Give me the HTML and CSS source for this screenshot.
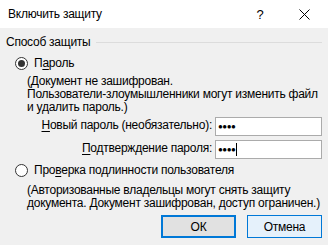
FILE: index.html
```html
<!DOCTYPE html>
<html lang="ru">
  <head>
    <meta charset="UTF-8" />
    <title>Включить защиту</title>
    <link rel="stylesheet" href="styles.css">
  </head>
  <body>
    <div class="dialog">
      <div class="titlebar">
        <span class="title">Включить защиту</span>
        <span class="tb-btn help">?</span>
        <span class="tb-btn close">
          <svg width="11" height="11" viewBox="0 0 11 11">
            <path d="M0.5 0.5 L10.5 10.5 M10.5 0.5 L0.5 10.5" stroke="#000" stroke-width="1" fill="none" />
          </svg>
        </span>
      </div>

      <div class="content">
        <div class="group-title">
          <span>Способ защиты</span>
          <span class="group-line"></span>
        </div>

        <div class="radio-row first">
          <span class="radio checked"></span>
          <span>П<u>а</u>роль</span>
        </div>
        <p class="note">
          (Документ не зашифрован.<br />
          Пользователи-злоумышленники могут изменить файл<br />
          и удалить пароль.)
        </p>

        <div class="fields">
          <label class="field-label"><u>Н</u>овый пароль (необязательно):</label>
          <div class="textbox">●●●●</div>
          <label class="field-label"><u>П</u>одтверждение пароля:</label>
          <div class="textbox">●●●●<span class="caret"></span></div>
        </div>

        <div class="radio-row second">
          <span class="radio"></span>
          <span>Про<u>в</u>ерка подлинности пользователя</span>
        </div>
        <p class="note note-second">
          (Авторизованные владельцы могут снять защиту<br />
          документа. Документ зашифрован, доступ ограничен.)
        </p>

        <div class="buttons">
          <button class="btn btn-default">ОК</button>
          <button class="btn btn-hover">Отмена</button>
        </div>
      </div>
    </div>
  </body>
</html>
```

FILE: styles.css
```css
/* Base */
:root {
  --face: #f0f0f0;
  --accent: #0078d7;
  --text: #000;
}

body {
  margin: 0;
  background: var(--face);
  font-family: "Liberation Sans", sans-serif;
  font-size: 12px;
  letter-spacing: -0.25px;
  color: var(--text);
}

u {
  text-decoration: underline;
  text-underline-offset: 2px;
}

.dialog {
  width: 328px;
  height: 245px;
  overflow: hidden;
  white-space: nowrap;
}

/* Title bar */
.titlebar {
  height: 28px;
  background: white;
  display: flex;
  align-items: center;
}

.title {
  padding-left: 8px;
  flex: 1;
}

.tb-btn {
  display: flex;
  align-items: center;
  justify-content: center;
}

.help {
  width: 14px;
  margin-right: 32px;
  font-size: 13px;
}

.close {
  width: 11px;
  margin-right: 18px;
}

/* Content */
.content {
  padding: 7px 6px 0 6px;
}

.group-title {
  display: flex;
  align-items: center;
  gap: 6px;
  line-height: 15px;
}

.group-line {
  flex: 1;
  height: 1px;
  background: #dcdcdc;
}

.radio-row {
  display: flex;
  align-items: center;
  gap: 6px;
  padding-left: 9px;
  line-height: 15px;
}

.radio-row.first {
  margin-top: 6px;
}

.radio-row.second {
  margin-top: 4px;
}

.radio {
  width: 11px;
  height: 11px;
  border: 1px solid #333;
  border-radius: 50%;
  background: white;
  display: flex;
  align-items: center;
  justify-content: center;
}

.radio.checked::after {
  content: "";
  width: 7px;
  height: 7px;
  border-radius: 50%;
  background: #333;
}

.note {
  margin: 4px 0 0 21px;
  line-height: 13px;
}

.note-second {
  margin-top: 6px;
}

/* Password rows */
.fields {
  display: grid;
  grid-template-columns: 1fr 107px;
  column-gap: 3px;
  row-gap: 4px;
  align-items: center;
  margin-top: 3px;
}

.field-label {
  text-align: right;
  padding-bottom: 3px;
}

.textbox {
  height: 17px;
  border: 1px solid #ababab;
  background: white;
  display: flex;
  align-items: center;
  padding-left: 2px;
  font-size: 8px;
  letter-spacing: -0.5px;
}

.caret {
  width: 1px;
  height: 13px;
  background: #000;
  margin-left: 1px;
}

/* Buttons */
.buttons {
  display: flex;
  justify-content: flex-end;
  gap: 11px;
  margin-top: 5px;
}

.btn {
  width: 75px;
  height: 23px;
  font-family: inherit;
  font-size: 12px;
  letter-spacing: inherit;
  color: var(--text);
  padding: 0;
  box-sizing: border-box;
}

.btn-default {
  background: #e1e1e1;
  border: 2px solid var(--accent);
}

.btn-hover {
  background: #e5f1fb;
  border: 1px solid var(--accent);
}
```
